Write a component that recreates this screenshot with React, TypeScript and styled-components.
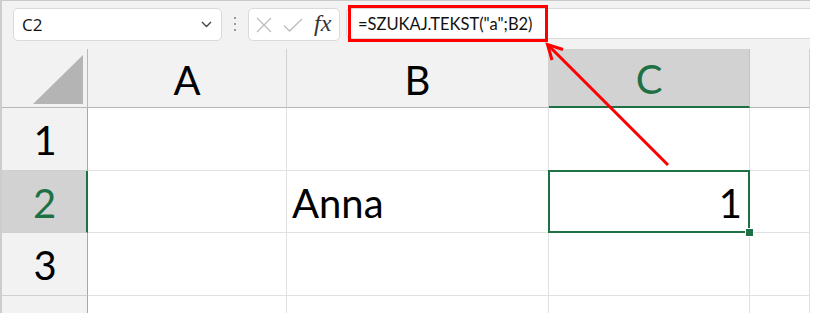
import styled, { createGlobalStyle } from 'styled-components'

const GlobalStyle = createGlobalStyle`
  html, body {
    margin: 0;
    padding: 0;
    background: #ffffff;
  }
  body {
    font-family: "Open Sans", "Noto Sans", sans-serif;
  }
`

const excelGreen = '#1e7145'

const Frame = styled.div`
  position: relative;
  width: 808px;
  height: 312px;
  border-left: 2px solid #cdcdcd;
  border-top: 1px solid #c9c9c9;
  background: #f2f2f2;
  overflow: hidden;
  display: flex;
  flex-direction: column;
`

const Toolbar = styled.div`
  display: flex;
  align-items: flex-start;
  height: 40px;
  padding: 7px 0 0 11px;
  box-sizing: border-box;
`

const NameBox = styled.div`
  width: 209px;
  height: 33px;
  box-sizing: border-box;
  background: #ffffff;
  border: 1px solid #dadada;
  border-radius: 5px;
  display: flex;
  align-items: center;
  justify-content: space-between;
  padding: 0 9px 0 8px;
`

const NameText = styled.span`
  font-family: "Open Sans", "Noto Sans", sans-serif;
  font-size: 17px;
  line-height: 1;
  color: #111;
`

const Dots = styled.div`
  width: 26px;
  height: 32px;
  display: flex;
  flex-direction: column;
  align-items: center;
  justify-content: center;
  gap: 3.5px;
`

const Dot = styled.span`
  width: 2.5px;
  height: 2.5px;
  border-radius: 50%;
  background: #7a7a7a;
`

const FnBox = styled.div`
  width: 92px;
  height: 33px;
  box-sizing: border-box;
  background: #ffffff;
  border: 1px solid #dadada;
  border-radius: 5px;
  display: flex;
  align-items: center;
  padding-left: 7px;
  gap: 11px;
`

const FxLabel = styled.span`
  font-family: "Liberation Serif", "DejaVu Serif", serif;
  font-style: italic;
  font-size: 24px;
  color: #333;
  line-height: 1;
  margin-top: -3px;
`

const FormulaBar = styled.div`
  position: relative;
  flex: 1;
  height: 31px;
  margin-left: 6px;
  box-sizing: border-box;
  background: #ffffff;
  border: 1px solid #dadada;
  border-right: none;
  border-radius: 5px 0 0 5px;
  display: flex;
  align-items: center;
  padding-left: 11px;
  font-family: Lato, "Open Sans", sans-serif;
  font-size: 16.5px;
  color: #111;
`

const Highlight = styled.div`
  position: absolute;
  left: 1px;
  top: -4px;
  width: 200px;
  height: 37px;
  box-sizing: border-box;
  border: 3px solid #ff0000;
  pointer-events: none;
`

const Sheet = styled.div`
  margin-top: 8px;
  display: grid;
  grid-template-columns: 86px 199px 262px 201px 60px;
  grid-template-rows: 59px 63px 62px 63px 40px;
  font-family: Lato, "Open Sans", sans-serif;
  font-size: 40px;
  line-height: 1;
  color: #000;
`

const Corner = styled.div`
  background: #f2f2f2;
  border-right: 1px solid #b8b8b8;
  border-bottom: 1px solid #b8b8b8;
  display: flex;
  align-items: flex-end;
  justify-content: flex-end;
  padding: 0 4px 3px 0;
`

const Triangle = styled.div`
  width: 50px;
  height: 49px;
  background: #b4b4b4;
  clip-path: polygon(100% 0, 100% 100%, 0 100%);
`

const ColHeader = styled.div<{ $active?: boolean }>`
  background: ${p => (p.$active ? '#d2d2d2' : '#f2f2f2')};
  border-right: 1px solid ${p => (p.$active ? '#c4c4c4' : '#d0d0d0')};
  border-bottom: ${p => (p.$active ? `2px solid ${excelGreen}` : '1px solid #b8b8b8')};
  color: ${p => (p.$active ? excelGreen : '#000')};
  display: flex;
  align-items: center;
  justify-content: center;
  padding-top: 3px;
`

const RowHeader = styled.div<{ $active?: boolean }>`
  background: ${p => (p.$active ? '#d2d2d2' : '#f2f2f2')};
  border-right: ${p => (p.$active ? `2px solid ${excelGreen}` : '1px solid #a8a8a8')};
  border-bottom: 1px solid #d0d0d0;
  color: ${p => (p.$active ? excelGreen : '#000')};
  display: flex;
  align-items: center;
  justify-content: center;
  padding: 2px 0 0 1px;
`

const Cell = styled.div<{ $align?: 'left' | 'right' }>`
  position: relative;
  background: #ffffff;
  border-right: 1px solid #e1e1e1;
  border-bottom: 1px solid #e1e1e1;
  display: flex;
  align-items: center;
  justify-content: ${p => (p.$align === 'right' ? 'flex-end' : 'flex-start')};
  padding: 3px 7px 0 5px;
`

const Selection = styled.div`
  position: absolute;
  z-index: 2;
  left: -1px;
  top: -1px;
  right: -1px;
  bottom: -1px;
  border: 2px solid ${excelGreen};
  pointer-events: none;
`

const FillHandle = styled.div`
  position: absolute;
  right: -6px;
  bottom: -6px;
  width: 7px;
  height: 7px;
  background: ${excelGreen};
  border: 1px solid #ffffff;
`

const ArrowLayer = styled.svg`
  position: absolute;
  z-index: 3;
  left: 0;
  top: 0;
  pointer-events: none;
`

const columns = ['A', 'B', 'C', '']
const rows: { label: string; cells: string[] }[] = [
  { label: '1', cells: ['', '', '', ''] },
  { label: '2', cells: ['', 'Anna', '1', ''] },
  { label: '3', cells: ['', '', '', ''] },
  { label: '', cells: ['', '', '', ''] },
]

export default function App() {
  return (
    <>
      <GlobalStyle />
      <Frame>
        <Toolbar>
          <NameBox>
            <NameText>C2</NameText>
            <svg width="11" height="7" viewBox="0 0 11 7">
              <path d="M1 1l4.5 4.5L10 1" fill="none" stroke="#444" strokeWidth="1.4" />
            </svg>
          </NameBox>
          <Dots>
            <Dot />
            <Dot />
            <Dot />
          </Dots>
          <FnBox>
            <svg width="16" height="16" viewBox="0 0 16 16">
              <path d="M1 1l14 14M15 1L1 15" stroke="#bdbdbd" strokeWidth="1.3" />
            </svg>
            <svg width="20" height="14" viewBox="0 0 20 14">
              <path d="M1 7.5l5.5 5.5L19 1" fill="none" stroke="#bdbdbd" strokeWidth="1.3" />
            </svg>
            <FxLabel>fx</FxLabel>
          </FnBox>
          <FormulaBar>
            =SZUKAJ.TEKST("a";B2)
            <Highlight />
          </FormulaBar>
        </Toolbar>

        <Sheet>
          <Corner>
            <Triangle />
          </Corner>
          {columns.map((c, i) => (
            <ColHeader key={i} $active={c === 'C'}>
              {c}
            </ColHeader>
          ))}
          {rows.map(row => (
            <>
              <RowHeader key={`h${row.label}`} $active={row.label === '2'}>
                {row.label}
              </RowHeader>
              {row.cells.map((v, ci) => {
                const active = row.label === '2' && ci === 2
                return (
                  <Cell key={`${row.label}-${ci}`} $align={active ? 'right' : 'left'}>
                    {v}
                    {active && (
                      <Selection>
                        <FillHandle />
                      </Selection>
                    )}
                  </Cell>
                )
              })}
            </>
          ))}
        </Sheet>

        <ArrowLayer width="808" height="312" viewBox="0 0 808 312">
          <line x1="666" y1="164" x2="546" y2="44" stroke="#ff0000" strokeWidth="3" />
          <polyline
            points="561,48.5 545.5,43.5 550,59"
            fill="none"
            stroke="#ff0000"
            strokeWidth="3"
          />
        </ArrowLayer>
      </Frame>
    </>
  )
}
